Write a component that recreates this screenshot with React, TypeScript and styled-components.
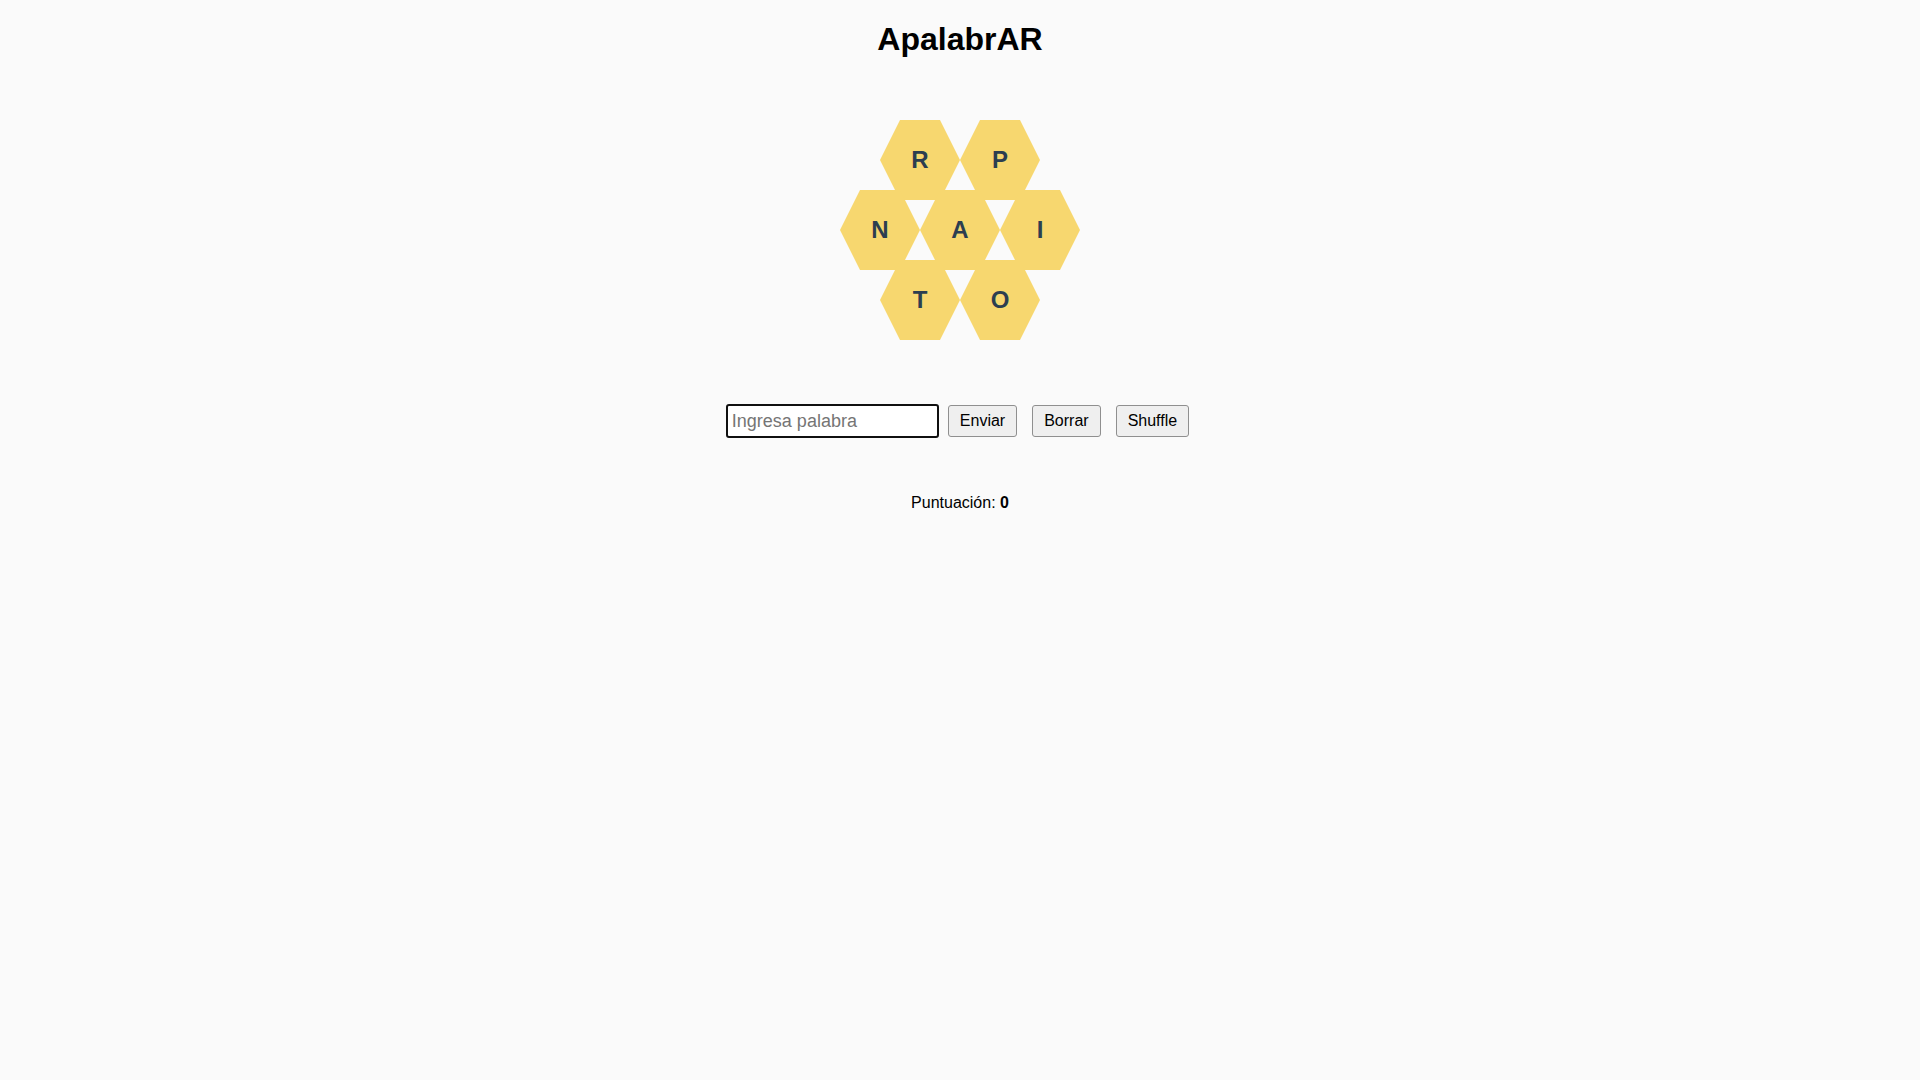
import React from "react";
import styled, { createGlobalStyle } from "styled-components";

const Global = createGlobalStyle`
  html, body {
    margin: 0;
    padding: 0;
    background: #fafafa;
    font-family: "Liberation Sans", Arial, sans-serif;
    color: #000;
  }
`;

const Page = styled.main`
  display: flex;
  flex-direction: column;
  align-items: center;
`;

const Title = styled.h1`
  margin: 21px 0 0;
  font-size: 32px;
  font-weight: bold;
  line-height: 37px;
`;

const Hive = styled.div`
  margin-top: 62px;
  display: flex;
  flex-direction: column;
  align-items: center;
`;

const HiveRow = styled.div<{ $first?: boolean }>`
  display: flex;
  margin-top: ${(p) => (p.$first ? "0" : "-10px")};
`;

const Hex = styled.div`
  width: 80px;
  height: 80px;
  background: #f7d76f;
  clip-path: polygon(25% 0, 75% 0, 100% 50%, 75% 100%, 25% 100%, 0 50%);
  display: flex;
  align-items: center;
  justify-content: center;
  font-family: "Liberation Sans", Arial, sans-serif;
  font-weight: bold;
  font-size: 24px;
  color: #2c3e50;
  cursor: pointer;
  user-select: none;
`;

const Controls = styled.div`
  margin-top: 64px;
  padding-right: 5px;
  display: flex;
  align-items: center;
`;

const WordInput = styled.input`
  box-sizing: border-box;
  width: 213px;
  height: 34px;
  border: 2px solid #101010;
  border-radius: 3px;
  padding: 0 4px;
  background: #fff;
  font-family: "Liberation Sans", Arial, sans-serif;
  font-size: 18px;
  color: #000;
  outline: none;
  &::placeholder {
    color: #757575;
  }
`;

const Button = styled.button<{ $first?: boolean }>`
  box-sizing: border-box;
  height: 32px;
  margin-left: ${(p) => (p.$first ? "9px" : "15px")};
  padding: 0 11px;
  border: 1px solid #8f8f8f;
  border-radius: 3px;
  background: #efefef;
  font-family: "Liberation Sans", Arial, sans-serif;
  font-size: 16px;
  color: #000;
  cursor: pointer;
`;

const Score = styled.p`
  margin: 56px 0 0;
  font-size: 16px;
  line-height: 18px;
`;

const rows: string[][] = [
  ["R", "P"],
  ["N", "A", "I"],
  ["T", "O"],
];

export default function App() {
  const [word, setWord] = React.useState("");
  return (
    <>
      <Global />
      <Page>
        <Title>ApalabrAR</Title>
        <Hive>
          {rows.map((row, i) => (
            <HiveRow key={i} $first={i === 0}>
              {row.map((l) => (
                <Hex key={l} onClick={() => setWord(word + l)}>
                  {l}
                </Hex>
              ))}
            </HiveRow>
          ))}
        </Hive>
        <Controls>
          <WordInput
            placeholder="Ingresa palabra"
            value={word}
            onChange={(e) => setWord(e.target.value)}
          />
          <Button $first>Enviar</Button>
          <Button onClick={() => setWord("")}>Borrar</Button>
          <Button>Shuffle</Button>
        </Controls>
        <Score>
          Puntuación: <b>0</b>
        </Score>
      </Page>
    </>
  );
}
